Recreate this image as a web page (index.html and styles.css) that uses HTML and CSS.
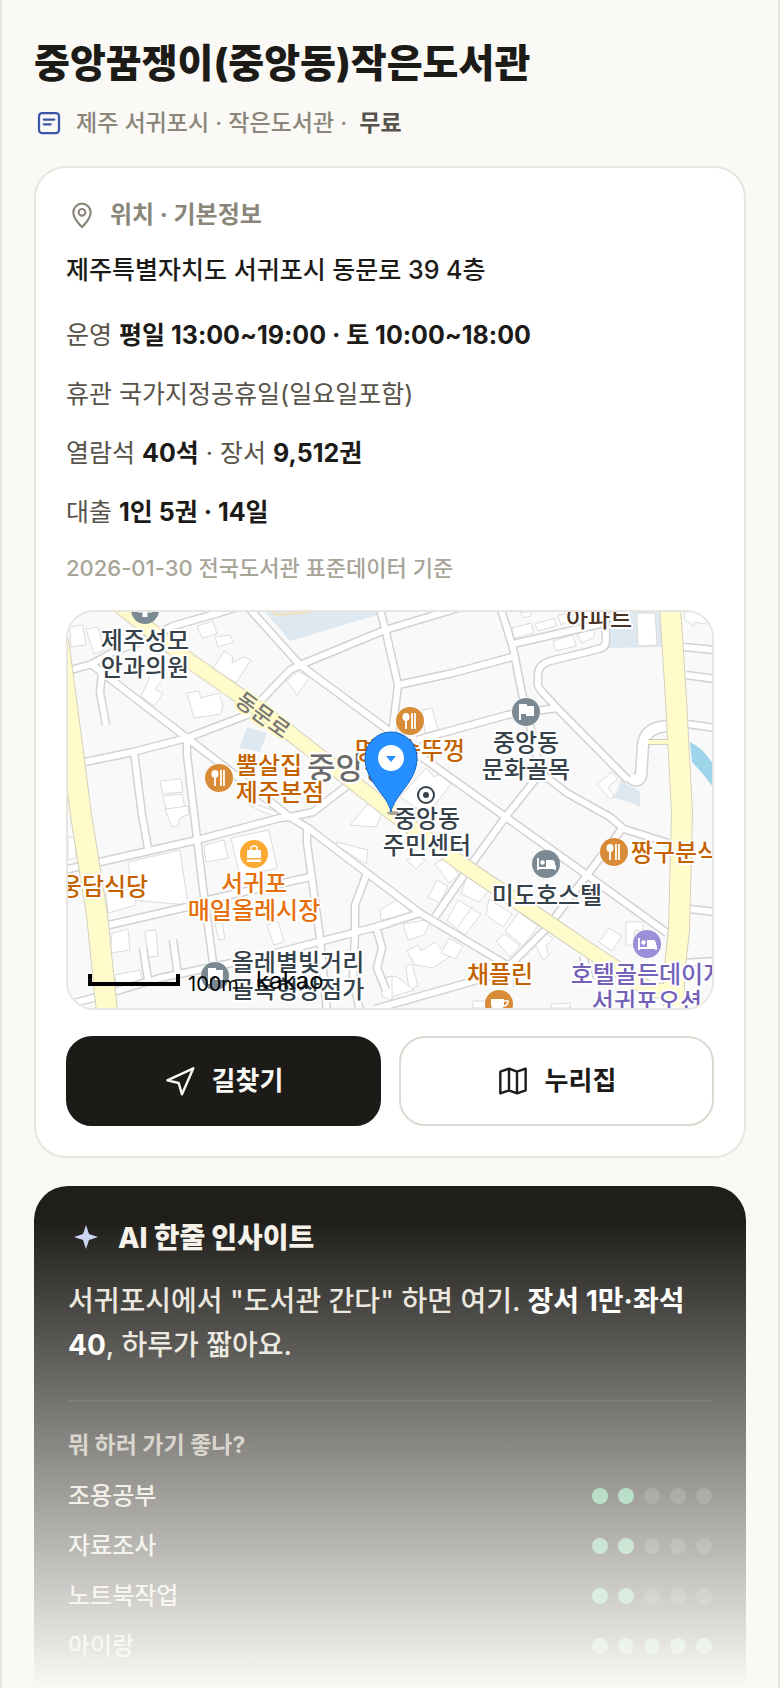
FILE: index.html
```html
<!DOCTYPE html>
<html lang="ko">
  <head>
    <meta charset="UTF-8" />
    <meta name="viewport" content="width=device-width, initial-scale=1" />
    <title>중앙꿈쟁이(중앙동)작은도서관</title>
    <link rel="stylesheet" href="styles.css" />
  </head>
  <body>
    <main class="page">
      <h1 class="title">중앙꿈쟁이(중앙동)작은도서관</h1>
      <p class="meta">
        <svg class="meta-icon" viewBox="0 0 24 24">
          <rect x="4" y="4" width="16" height="16" rx="2.5" />
          <path d="M7.8 9.2h8.4M7.8 13h5.6" />
        </svg>
        <span>제주 서귀포시 · 작은도서관 ·</span>
        <strong>무료</strong>
      </p>

      <section class="card">
        <h2 class="card-title">
          <svg class="card-icon" viewBox="0 0 24 24">
            <path d="M12 21s-6.5-5.8-6.5-11a6.5 6.5 0 0 1 13 0c0 5.200-6.500 11-6.500 11z" />
            <circle cx="12" cy="10" r="2.500" />
          </svg>
          위치 · 기본정보
        </h2>
        <p class="address">제주특별자치도 서귀포시 동문로 39 4층</p>
        <div class="facts">
          <p>운영 <strong>평일 13:00~19:00 · 토 10:00~18:00</strong></p>
          <p>휴관 국가지정공휴일(일요일포함)</p>
          <p>열람석 <strong>40석</strong> · 장서 <strong>9,512권</strong></p>
          <p>대출 <strong>1인 5권 · 14일</strong></p>
        </div>
        <p class="source">2026-01-30 전국도서관 표준데이터 기준</p>

        <div class="map">
          <svg class="map-canvas" viewBox="68 612 644 396" preserveAspectRatio="xMidYMid slice" role="img" aria-label="지도">
            <defs>
              <g id="roads">
                <path d="M60 673L92 664L113 652L150 638L173 626L215 614L245 605" />
                <path d="M91 664L187 738L290 817L308 828L367 873L420 913L510 967V987" />
                <path d="M102 672L100 692L106 725" />
                <path d="M85 762L133 752L187 738L247 715L290 670L300 665L385 630L465 606" />
                <path d="M247 606L300 665L388 730L423 758L507 818L587 875L667 933" />
                <path d="M379 606L385 628L398 685L392 735" />
                <path d="M398 685L453 673L512 657" />
                <path d="M500 606L513 648L523 698L533 738L540 772L567 793L610 817L624 829L668 843" />
                <path d="M513 644L600 624" />
                <path d="M605 612L606 640Q606 648 598 649L587 652L550 661Q538 665 538 675V685Q539 689 545 695L557 708L628 780" />
                <path d="M417 740L507 715L557 708" />
                <path d="M539 775L507 815L473 862L435 917" />
                <path d="M684 647L715 650M686 675L715 679M688 724L715 728M690 909L715 912M684 963L715 961" />
                <path d="M621 830L587 875L553 920" />
                <path d="M370 929L420 913" />
                <path d="M64 870L100 862L197 840L280 818L290 817" />
                <path d="M109 925L187 907M203 901L310 877" />
                <path d="M55 1008L93 998L160 978L260 957L353 933L390 923" />
                <path d="M134 752L142 815L148 848" />
                <path d="M187 740L187 755L193 805L203 888L212 955L216 990" />
                <path d="M307 826L307 843L320 938L327 1012" />
                <path d="M367 873L355 905L355 933L353 978L360 1012" />
                <path d="M352 782L313 812L290 817" />
                <path d="M547 928L510 965" />
                <path d="M375 1009L467 983L510 970" />
                <path d="M143 948L148 980M173 940L178 975" />
                <path d="M377 930L382 948L377 968L386 990" />
                <path d="M583 956L590 980" />
              </g>
              <g id="fork">
                <circle r="14.500" fill="#fff" />
                <circle r="14" fill="#d98c38" />
                <ellipse cx="-4" cy="-4" rx="3.500" ry="4" fill="#fff" />
                <path d="M-4 0v8M2 -8v16M5 -8v16" stroke="#fff" stroke-width="1.800" />
              </g>
              <g id="bed">
                <path d="M-8 -6V6M-8 4H9V6M9 4V1" stroke="#fff" stroke-width="1.800" fill="none" />
                <circle cx="-3.500" cy="-1.500" r="2.200" fill="#fff" />
                <path d="M0 -4H6Q9 -4 9 0V3H0z" fill="#fff" />
              </g>
              <g id="flag">
                <circle r="14.500" fill="#fff" />
                <circle r="14" fill="#7b8a92" />
                <path d="M-7 -8H1V-6H8V4H0V2H-5V8H-7z" fill="#fff" />
              </g>
            </defs>

            <rect x="68" y="612" width="644" height="396" fill="#f9f9f9" />

            <!-- school grounds and water -->
            <g fill="#dde8f1">
              <path d="M265 612L290 641L377 615L380 612z" />
              <path d="M247 727L267 733L260 752L239 748z" />
              <path d="M610 612H660L662 647L608 648z" />
              <path d="M620 780L630 786L640 791V807L627 801L612 798L618 790z" />
            </g>
            <path d="M273 612L276 615L310 612" fill="none" stroke="#efdfb5" stroke-width="2" />
            <path d="M690 742Q706 750 715 768V790Q704 774 692 762z" fill="#9fd5ea" />

            <g class="building">
              <path d="M70 627L83 625L86 645L71 647z" />
              <path d="M86 629L98 627L104 650L94 654z" />
              <path d="M197 626L213 621L217 634L202 638z" />
              <path d="M215 637L229 635L234 642L218 647z" />
              <path d="M224 651L233 657L232 663L243 657L251 660L236 683L213 669z" />
              <path d="M287 681L298 671L309 678L297 695z" />
              <path d="M158 662L165 676L155 689L163 693L154 706L141 696L149 680L148 667z" />
              <path d="M187 693L199 691L201 698L219 693L223 705L221 714L194 718z" />
              <path d="M160 781L181 779L183 792L163 794zM163 796L182 794L185 808L166 809z" />
              <path d="M165 809L188 806L189 814L180 818L178 826L172 827z" />
              <path d="M250 806L258 805L277 812L278 818z" />
              <path d="M512 628L531 623L534 633L514 638zM535 624L554 618L556 626L538 631zM558 616L567 613L569 620L561 625z" />
              <path d="M553 641L573 635L576 646L556 651zM577 634L594 628V637L582 643z" />
              <path d="M520 612H531V616L524 618z" />
              <path d="M637 613H655L657 645L638 646z" />
              <path d="M684 612H706V624L694 622V626L685 620z" />
              <path d="M597 784L612 772L618 779L608 787L614 795L610 799z" />
              <path d="M422 710L432 708L438 730L425 733z" />
              <path d="M400 797L426 768L434 777L440 774L451 784L427 815z" />
              <path d="M204 845L224 840L228 858L206 862zM231 838L269 830L277 868L240 877z" />
              <path d="M128 862L180 850L188 905L133 900z" />
              <path d="M106 893L134 888L136 905L108 913z" />
              <path d="M112 933L128 929L130 950L110 953zM145 931L156 930L158 956L148 957z" />
              <path d="M267 925L278 922L284 942L274 945zM215 924L222 922L225 939L219 940z" />
              <path d="M337 842L368 850L366 864L336 845z" />
              <path d="M350 825L368 804L383 811L376 827z" />
              <path d="M407 860L416 855L425 860L416 869zM435 864L446 857L459 875L449 883z" />
              <path d="M437 880L448 886L440 903L428 897z" />
              <path d="M467 876L490 889L479 902L461 894z" />
              <path d="M458 900L481 914L465 935L447 921zM473 906L458 927" />
              <path d="M489 899L512 914L503 927L486 915zM519 912L538 926L523 946L505 931z" />
              <path d="M505 934L520 946L510 957L496 941z" />
              <path d="M380 910L400 898L411 914L381 920z" />
              <path d="M403 924L432 919L424 935L408 940z" />
              <path d="M407 951L418 945L421 951L435 942L449 957L433 968L415 965z" />
              <path d="M449 938L463 946L456 959L441 953z" />
              <path d="M406 966L412 964L418 986L409 991z" />
              <path d="M382 978L396 976L414 990L388 998z" />
              <path d="M534 942L546 934L553 938L546 946L549 955L543 960z" />
              <path d="M599 942L609 928L622 936L612 951z" />
              <path d="M626 922H643V932L635 930L633 944L626 946z" />
              <path d="M115 975L140 970L143 984L117 989z" />
              <path d="M380 980L392 976V1000L382 996z" />
              <path d="M473 1001H486V1008H473zM551 1004L570 1003V1008H551z" />
              <path d="M68 837L75 838L76 858L68 860z" />
            </g>

            <use href="#roads" class="road-edge" />
            <path class="road-edge wide" d="M630 777Q638 784 641 776L643 745Q645 727 668 726" />
            <use href="#roads" class="road-fill" />
            <path class="road-fill wide" d="M630 777Q638 784 641 776L643 745Q645 727 668 726" />

            <g class="main-edge">
              <path d="M120 606L187 659L263 712L391 812L463 865L540 917L593 953L650 990L675 992" />
              <path d="M58 640L74 760L81 815L97 915L107 1012" class="broad" />
              <path d="M670 606L676 700L682 812L679 930L674 975L674 1012" class="broad" />
              <path d="M648 742H672" class="thin" />
            </g>
            <g class="main-fill">
              <path d="M120 606L187 659L263 712L391 812L463 865L540 917L593 953L650 990L675 992" />
              <path d="M58 640L74 760L81 815L97 915L107 1012" class="broad" />
              <path d="M670 606L676 700L682 812L679 930L674 975L674 1012" class="broad" />
              <path d="M648 742H672" class="thin" />
            </g>

            <use href="#flag" x="215" y="976" />

            <g class="label">
              <text class="street" x="263" y="723" transform="rotate(36 263 715)">동문로</text>
              <text class="district" x="307" y="779">중앙동</text>

              <g class="mid dark">
                <text x="145" y="649">제주성모</text>
                <text x="145" y="676">안과의원</text>
                <text x="526" y="751">중앙동</text>
                <text x="526" y="778">문화골목</text>
                <text x="427" y="827">중앙동</text>
                <text x="427" y="854">주민센터</text>
                <text x="547" y="904">미도호스텔</text>
                <text x="298" y="971">올레별빛거리</text>
                <text x="298" y="998">골목형상점가</text>
              </g>
              <g class="mid food">
                <text x="269" y="774">뿔살집</text>
                <text x="280" y="801">제주본점</text>
                <text x="410" y="759">명가솥뚜껑</text>
                <text x="104" y="895">웅담식당</text>
                <text x="675" y="861">짱구분식</text>
                <text x="500" y="983">채플린</text>
              </g>
              <g class="mid market">
                <text x="254" y="892">서귀포</text>
                <text x="254" y="919">매일올레시장</text>
              </g>
              <g class="mid hotel">
                <text x="648" y="983">호텔골든데이지</text>
                <text x="647" y="1010">서귀포오션</text>
              </g>
              <text class="mid apt" x="599" y="627">아파트</text>
            </g>

            <g transform="translate(145 610)">
              <circle r="14" fill="#7b8a92" />
              <path d="M-7 0H7M0 -7V7" stroke="#fff" stroke-width="5" />
            </g>
            <use href="#fork" x="219" y="778" />
            <use href="#fork" x="410" y="721" />
            <use href="#fork" x="614" y="852" />
            <use href="#flag" x="526" y="712" />
            <g transform="translate(546 864)">
              <circle r="14" fill="#7b8a92" />
              <use href="#bed" />
            </g>
            <g transform="translate(647 944)">
              <circle r="14" fill="#9c8fd8" />
              <use href="#bed" />
            </g>
            <g transform="translate(499 1004)">
              <circle r="14" fill="#d98c38" />
              <path d="M-8 -5H5V0Q5 6 -1 6H-3Q-8 6 -8 0z" fill="#fff" />
              <path d="M5 -3H9Q9 2 4 2" fill="none" stroke="#fff" stroke-width="1.500" />
            </g>
            <g transform="translate(254 854)">
              <circle r="14" fill="#fba932" />
              <path d="M-7 -4H7V4H-7zM-7 5.500H7V8H-7z" fill="#fff" />
              <path d="M-3 -3V-6Q-3 -8 0 -8T3 -6V-3" fill="none" stroke="#fff" stroke-width="1.500" />
            </g>
            <g transform="translate(426 795)">
              <circle r="8" fill="#fff" stroke="#36424a" stroke-width="2" />
              <circle r="3" fill="#36424a" />
            </g>

            <!-- marker -->
            <ellipse cx="393" cy="813" rx="6" ry="2" fill="#555" opacity="0.5" />
            <path d="M391 812C388 795 365 782 365 758A26 26 0 0 1 417 758C417 782 394 795 391 812z" fill="#258fff" stroke="#1264c8" />
            <circle cx="391" cy="758" r="13" fill="#fff" />
            <path d="M386 756H396L391 762z" fill="#258fff" />

            <!-- scale -->
            <path d="M90 974V984H178V974" fill="none" stroke="#000" stroke-width="4" />
            <text class="scale" x="188" y="991">100m</text>
            <text class="brand" x="256" y="989">kakao</text>
          </svg>
        </div>

        <div class="actions">
          <a class="button button-dark" href="#">
            <svg class="button-icon" viewBox="0 0 24 24">
              <path d="M2.500 11.500L22 2.500L13.500 22L11 13.500z" />
            </svg>
            길찾기
          </a>
          <a class="button button-light" href="#">
            <svg class="button-icon" viewBox="0 0 24 24">
              <path d="M2.500 5L9 2.800L15 5L21.500 2.800V19L15 21.200L9 19L2.500 21.200zM9 2.800V19M15 5V21.200" />
            </svg>
            누리집
          </a>
        </div>
      </section>

      <section class="insight">
        <h2 class="insight-title">
          <svg class="insight-icon" viewBox="0 0 36 36">
            <path d="M18 5L21 14L30 17L21 20L18 29L15 20L6 17L15 14z" />
          </svg>
          AI 한줄 인사이트
        </h2>
        <p class="insight-text">
          서귀포시에서 "도서관 간다" 하면 여기. <strong>장서 1만·좌석 40</strong>, 하루가 짧아요.
        </p>
        <div class="purposes">
          <h3 class="purposes-title">뭐 하러 가기 좋나?</h3>
          <ul class="purpose-list">
            <li>조용공부 <span class="dots"><i class="on"></i><i class="on"></i><i></i><i></i><i></i></span></li>
            <li>자료조사 <span class="dots"><i class="on"></i><i class="on"></i><i></i><i></i><i></i></span></li>
            <li>노트북작업 <span class="dots"><i class="on"></i><i class="on"></i><i></i><i></i><i></i></span></li>
            <li>아이랑 <span class="dots"><i class="on"></i><i class="on"></i><i class="on"></i><i class="on"></i><i class="on"></i></span></li>
          </ul>
        </div>
      </section>
      <div class="fade"></div>
    </main>
  </body>
</html>
```

FILE: styles.css
```css
* {
  box-sizing: border-box;
}

body {
  margin: 0;
  background: #faf9f5;
  color: #1c1b17;
  font-family: Inter, "Noto Sans CJK KR", sans-serif;
  font-weight: 500;
}

h1,
h2,
h3,
p,
ul {
  margin: 0;
  padding: 0;
}

.page {
  position: relative;
  padding: 38px 32px 0;
  border-left: 2px solid #e8e6de;
  border-right: 2px solid #e8e6de;
}

.title {
  font-size: 39px;
  line-height: 50px;
  font-weight: 800;
}

.meta {
  display: flex;
  align-items: center;
  gap: 12px;
  margin-top: 17px;
  font-size: 23px;
  line-height: 36px;
  color: #8a867a;
}

.meta strong {
  color: #57534a;
}

.meta-icon {
  width: 30px;
  height: 30px;
  fill: none;
  stroke: #3d57a8;
  stroke-width: 1.8;
  stroke-linecap: round;
}

.card {
  margin-top: 25px;
  padding: 30px;
  border: 2px solid #e8e6df;
  border-radius: 32px;
  background: #fff;
}

.card-title {
  display: flex;
  align-items: center;
  gap: 12px;
  font-size: 24px;
  line-height: 34px;
  color: #8a867a;
}

.card-icon {
  width: 32px;
  height: 32px;
  fill: none;
  stroke: #8a867a;
  stroke-width: 1.6;
}

.address {
  margin-top: 19px;
  font-size: 25px;
  line-height: 38px;
}

.facts {
  display: flex;
  flex-direction: column;
  gap: 21px;
  margin-top: 27px;
  font-size: 25px;
  line-height: 38px;
  font-weight: 400;
  color: #57534a;
}

.facts strong {
  font-weight: 700;
  color: #1c1b17;
}

.source {
  margin-top: 21px;
  font-size: 22px;
  line-height: 32px;
  color: #a8a498;
}

.map {
  height: 400px;
  margin-top: 26px;
  border: 2px solid #e8e6df;
  border-radius: 28px;
  overflow: hidden;
}

.map-canvas {
  display: block;
  width: 100%;
  height: 100%;
}

.building {
  fill: #fff;
  stroke: #dcdcdc;
}

.road-edge,
.road-fill,
.main-edge,
.main-fill {
  fill: none;
  stroke-linejoin: round;
}

.road-edge {
  stroke: #d2d2d2;
  stroke-width: 9;
}

.road-fill {
  stroke: #fff;
  stroke-width: 6;
}

.road-edge.wide {
  stroke-width: 13;
}

.road-fill.wide {
  stroke-width: 10;
}

.main-edge {
  stroke: #d5d0bd;
  stroke-width: 16;
}

.main-fill {
  stroke: #fffbcb;
  stroke-width: 14;
}

.main-edge .broad {
  stroke-width: 22;
}

.main-fill .broad {
  stroke-width: 20;
}

.main-edge .thin {
  stroke-width: 6;
}

.main-fill .thin {
  stroke-width: 4;
}

.label {
  font-family: "Noto Sans CJK KR", sans-serif;
  font-weight: 500;
  stroke: #fff;
  stroke-width: 4;
  stroke-linejoin: round;
  paint-order: stroke;
}

.mid {
  font-size: 24px;
  text-anchor: middle;
}

.dark {
  fill: #36424a;
}

.food {
  fill: #c46200;
}

.market {
  fill: #e56f0c;
}

.hotel {
  fill: #7462b8;
}

.apt {
  fill: #4a3226;
}

.street {
  font-size: 22px;
  fill: #777;
  stroke: #fffbcb;
  text-anchor: middle;
}

.district {
  font-size: 31px;
  fill: #6b6b6b;
}

.scale {
  font-size: 20px;
  font-weight: 400;
}

.brand {
  font-size: 24px;
  font-weight: 400;
}

.actions {
  display: flex;
  gap: 18px;
  margin-top: 26px;
}

.button {
  flex: 1;
  display: flex;
  align-items: center;
  justify-content: center;
  gap: 16px;
  height: 90px;
  border: 2px solid #1c1b17;
  border-radius: 26px;
  font-size: 26px;
  line-height: 36px;
  font-weight: 700;
  text-decoration: none;
}

.button-dark {
  background: #1c1b17;
  color: #faf9f5;
}

.button-light {
  border-color: #dcdad0;
  background: #fff;
  color: #1c1b17;
}

.button-icon {
  width: 32px;
  height: 32px;
  fill: none;
  stroke: currentColor;
  stroke-width: 1.8;
  stroke-linejoin: round;
}

.insight {
  margin-top: 28px;
  padding: 34px 34px 17px;
  border-radius: 34px 34px 0 0;
  background: #1f1e1a;
  color: #e8e4da;
}

.insight-title {
  display: flex;
  align-items: center;
  gap: 14px;
  font-size: 28px;
  line-height: 36px;
  font-weight: 800;
  color: #f5f2ea;
}

.insight-icon {
  width: 36px;
  height: 36px;
  fill: #c9d4f2;
}

.insight-text {
  margin-top: 23px;
  font-size: 28px;
  line-height: 44px;
}

.insight-text strong {
  color: #fff;
}

.purposes {
  margin-top: 33px;
  padding-top: 28px;
  border-top: 2px solid #33322e;
}

.purposes-title {
  font-size: 23px;
  line-height: 30px;
  color: #b9b5a8;
}

.purpose-list {
  margin-top: 11px;
  list-style: none;
}

.purpose-list li {
  display: flex;
  align-items: center;
  justify-content: space-between;
  height: 50px;
  font-size: 24px;
  line-height: 34px;
}

.dots {
  display: flex;
  gap: 10px;
}

.dots i {
  width: 16px;
  height: 16px;
  border-radius: 50%;
  background: #403f3b;
}

.dots .on {
  background: #5fb88a;
}

/* cuts the locked part off softly */
.fade {
  position: absolute;
  left: 0;
  right: 0;
  bottom: 0;
  height: 468px;
  background: linear-gradient(rgba(250, 249, 245, 0), #faf9f5);
  pointer-events: none;
}
```
